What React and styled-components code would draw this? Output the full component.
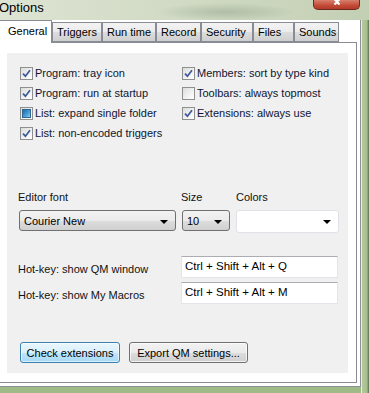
import React from 'react';
import styled, { createGlobalStyle } from 'styled-components';

const GlobalStyle = createGlobalStyle`
  html, body {
    margin: 0;
    padding: 0;
    overflow: hidden;
  }
  body {
    font-family: "Liberation Sans", Arial, sans-serif;
  }
`;

const Frame = styled.div`
  width: 369px;
  height: 393px;
  display: flex;
  flex-direction: column;
  background: linear-gradient(180deg, #d3dcc6 0px, #cbd6bd 20px, #b5c89c 60px, #aac192 200px, #9fb987 393px);
  overflow: hidden;
`;

const TitleBar = styled.div`
  height: 20px;
  flex: none;
  display: flex;
  justify-content: space-between;
  align-items: flex-start;
  background:
    radial-gradient(ellipse 70px 9px at 225px 12px, rgba(90, 110, 90, 0.25), transparent),
    linear-gradient(90deg, #dde4d3 0%, #d3dcc7 40%, #c9d4bb 80%, #c3cfb3 100%);
`;

const Title = styled.span`
  font-size: 13px;
  line-height: 15px;
  color: #000;
  margin-left: -1px;
`;

const CloseButton = styled.div`
  width: 47px;
  height: 10px;
  margin-right: 9px;
  box-sizing: border-box;
  border: 1px solid #6e2a22;
  border-top: none;
  border-radius: 0 0 5px 5px;
  background: linear-gradient(180deg, #d9806f 0%, #c44a37 60%, #b23a28 100%);
  display: flex;
  justify-content: center;
`;

const CloseGlyph = styled.svg`
  display: block;
`;

const Body = styled.div`
  flex: 1;
  display: flex;
`;

const Client = styled.div`
  width: 362px;
  height: 367px;
  margin-left: -1px;
  box-sizing: border-box;
  background: #fff;
  border-right: 1px solid #8c8f96;
  border-bottom: 1px solid #8c8f96;
  padding: 0 3px 3px 0;
  display: flex;
  flex-direction: column;
`;

const TabStrip = styled.div`
  display: flex;
  align-items: flex-end;
  height: 22px;
  flex: none;
  position: relative;
  z-index: 1;
`;

const Tab = styled.div`
  box-sizing: border-box;
  width: ${(p) => p.$w}px;
  height: ${(p) => (p.$active ? '23px' : '20px')};
  padding: ${(p) => (p.$active ? '3px 0 0 8px' : '2px 0 0 4px')};
  margin-bottom: ${(p) => (p.$active ? '-1px' : '0')};
  border: 1px solid #898c95;
  border-bottom: ${(p) => (p.$active ? 'none' : '1px solid #898c95')};
  background: ${(p) =>
    p.$active ? '#fff' : 'linear-gradient(180deg, #f3f3f3 0%, #ebebeb 50%, #dddddd 51%, #cfcfcf 100%)'};
  font-size: 11px;
  line-height: 14px;
  color: #000;
  white-space: nowrap;
  overflow: hidden;
`;

const Panel = styled.div`
  flex: 1;
  box-sizing: border-box;
  border: 1px solid #898c95;
  background: #fff;
  padding: 10px 8px 9px 7px;
  display: flex;
`;

const Sheet = styled.div`
  flex: 1;
  background: #f0f0f0;
  padding: 10px 0 0 11px;
  display: flex;
  flex-direction: column;
  font-size: 11px;
  color: #111;
`;

const CheckGrid = styled.div`
  display: grid;
  grid-template-columns: 162px 1fr;
  grid-auto-rows: 20px;
  margin-left: 2px;
`;

const CheckRow = styled.label`
  display: flex;
  align-items: center;
  gap: 2px;
  white-space: nowrap;
  color: #0f1530;
  font-size: 11px;
`;

const Box = styled.span`
  width: 13px;
  height: 13px;
  box-sizing: border-box;
  border: 1px solid #8e8f8f;
  background: linear-gradient(135deg, #dcdcdc 0%, #f6f6f6 70%, #fff 100%);
  display: flex;
  align-items: center;
  justify-content: center;
  flex: none;
`;

const Fill = styled.span`
  width: 9px;
  height: 9px;
  box-sizing: border-box;
  border: 1px solid #2f6894;
  background: linear-gradient(135deg, #1f6aa8 0%, #4aa0d6 60%, #8acbeb 100%);
`;

const FontGrid = styled.div`
  display: grid;
  grid-template-columns: 158px 48px 103px;
  column-gap: 6px;
  grid-template-rows: 14px 21px;
  row-gap: 6px;
  margin-top: 47px;
  align-items: center;
`;

const FieldLabel = styled.span`
  font-size: 11px;
  color: #111;
  margin-left: ${(p) => p.$shift || 0}px;
`;

const Combo = styled.div`
  box-sizing: border-box;
  border: 1px solid ${(p) => (p.$plain ? '#dfe3e8' : '#707070')};
  border-radius: 3px;
  background: ${(p) =>
    p.$plain ? '#fff' : 'linear-gradient(180deg, #f2f2f2 0%, #ebebeb 50%, #dddddd 51%, #cfcfcf 100%)'};
  display: flex;
  align-items: center;
  justify-content: space-between;
  padding: 0 7px 0 4px;
  font-size: 11px;
  color: #000;
  margin-left: ${(p) => p.$shift || 0}px;
  margin-top: ${(p) => (p.$plain ? '1px' : '0')};
  height: ${(p) => (p.$plain ? '23px' : '21px')};
`;

const Arrow = styled.span`
  width: 0;
  height: 0;
  border-left: 4px solid transparent;
  border-right: 4px solid transparent;
  border-top: 4px solid #000;
  margin-top: 2px;
`;

const HotGrid = styled.div`
  display: grid;
  grid-template-columns: 163px 157px;
  grid-auto-rows: 22px;
  row-gap: 4px;
  margin-top: 25px;
  align-items: center;
`;

const HotLabel = styled.span`
  font-size: 11px;
  color: #111;
  padding-top: ${(p) => (p.$low ? '3px' : '4px')};
`;

const KeyInput = styled.div`
  box-sizing: border-box;
  height: 22px;
  border: 1px solid #e2e6ea;
  border-top-color: #abadb3;
  background: #fff;
  padding: 0 3px;
  font-size: 11.5px;
  line-height: 18px;
  color: #000;
  white-space: nowrap;
`;

const ButtonRow = styled.div`
  display: flex;
  gap: 9px;
  margin-top: 38px;
  margin-left: 2px;
`;

const Button = styled.div`
  box-sizing: border-box;
  height: 21px;
  width: ${(p) => p.$w}px;
  border: 1px solid ${(p) => (p.$focus ? '#3c7fb1' : '#707070')};
  border-radius: 3px;
  background: ${(p) =>
    p.$focus
      ? 'linear-gradient(180deg, #eaf6fd 0%, #d9f0fc 50%, #bee6fd 51%, #a7d9f5 100%)'
      : 'linear-gradient(180deg, #f2f2f2 0%, #ebebeb 50%, #dddddd 51%, #cfcfcf 100%)'};
  box-shadow: inset 0 0 0 1px ${(p) => (p.$focus ? 'rgba(255,255,255,0.6)' : 'rgba(255,255,255,0.7)')};
  display: flex;
  align-items: center;
  justify-content: center;
  font-size: 11px;
  color: #000;
`;

const RightFrame = styled.div`
  flex: 1;
  border-left: 1px solid #e9eee3;
  background: linear-gradient(90deg, #b5c99c 0%, #a6bf8d 70%, #5d6b55 100%);
`;

const tabs = [
  { label: 'Triggers', w: 50 },
  { label: 'Run time', w: 54 },
  { label: 'Record', w: 45 },
  { label: 'Security', w: 52 },
  { label: 'Files', w: 41 },
  { label: 'Sounds', w: 45 },
];

const leftChecks = [
  { label: 'Program: tray icon', state: 'on' },
  { label: 'Program: run at startup', state: 'on' },
  { label: 'List: expand single folder', state: 'mixed' },
  { label: 'List: non-encoded triggers', state: 'on' },
];

const rightChecks = [
  { label: 'Members: sort by type kind', state: 'on' },
  { label: 'Toolbars: always topmost', state: 'off' },
  { label: 'Extensions: always use', state: 'on' },
  null,
];

function CheckBox({ state }) {
  return (
    <Box>
      {state === 'on' && (
        <svg width="9" height="9" viewBox="0 0 9 9">
          <path d="M1 4.6 L3.4 7.2 L8 1.2" fill="none" stroke="#3b5898" strokeWidth="1.7" />
        </svg>
      )}
      {state === 'mixed' && <Fill />}
    </Box>
  );
}

export default function App() {
  const cells = [];
  leftChecks.forEach((item, i) => {
    cells.push(
      <CheckRow key={'l' + i}>
        <CheckBox state={item.state} />
        {item.label}
      </CheckRow>
    );
    const r = rightChecks[i];
    cells.push(
      r ? (
        <CheckRow key={'r' + i}>
          <CheckBox state={r.state} />
          {r.label}
        </CheckRow>
      ) : (
        <span key={'r' + i} />
      )
    );
  });

  return (
    <Frame>
      <GlobalStyle />
      <TitleBar>
        <Title>Options</Title>
        <CloseButton>
          <CloseGlyph width="14" height="5" viewBox="0 0 14 5">
            <path d="M2 -3 L7 1.5 L12 -3 M4.5 4.5 L7 2 L9.5 4.5" stroke="#fff" strokeWidth="2.2" fill="none" />
          </CloseGlyph>
        </CloseButton>
      </TitleBar>
      <Body>
        <Client>
          <TabStrip>
            <Tab $active $w={53}>General</Tab>
            {tabs.map((t) => (
              <Tab key={t.label} $w={t.w}>{t.label}</Tab>
            ))}
          </TabStrip>
          <Panel>
            <Sheet>
              <CheckGrid>{cells}</CheckGrid>

              <FontGrid>
                <FieldLabel>Editor font</FieldLabel>
                <FieldLabel $shift={-1}>Size</FieldLabel>
                <FieldLabel>Colors</FieldLabel>
                <Combo $shift={1}>
                  Courier New
                  <Arrow />
                </Combo>
                <Combo>
                  10
                  <Arrow />
                </Combo>
                <Combo $plain>
                  <span />
                  <Arrow />
                </Combo>
              </FontGrid>

              <HotGrid>
                <HotLabel>Hot-key: show QM window</HotLabel>
                <KeyInput>Ctrl + Shift + Alt + Q</KeyInput>
                <HotLabel $low>Hot-key: show My Macros</HotLabel>
                <KeyInput>Ctrl + Shift + Alt + M</KeyInput>
              </HotGrid>

              <ButtonRow>
                <Button $focus $w={100}>Check extensions</Button>
                <Button $w={119}>Export QM settings...</Button>
              </ButtonRow>
            </Sheet>
          </Panel>
        </Client>
        <RightFrame />
      </Body>
    </Frame>
  );
}
